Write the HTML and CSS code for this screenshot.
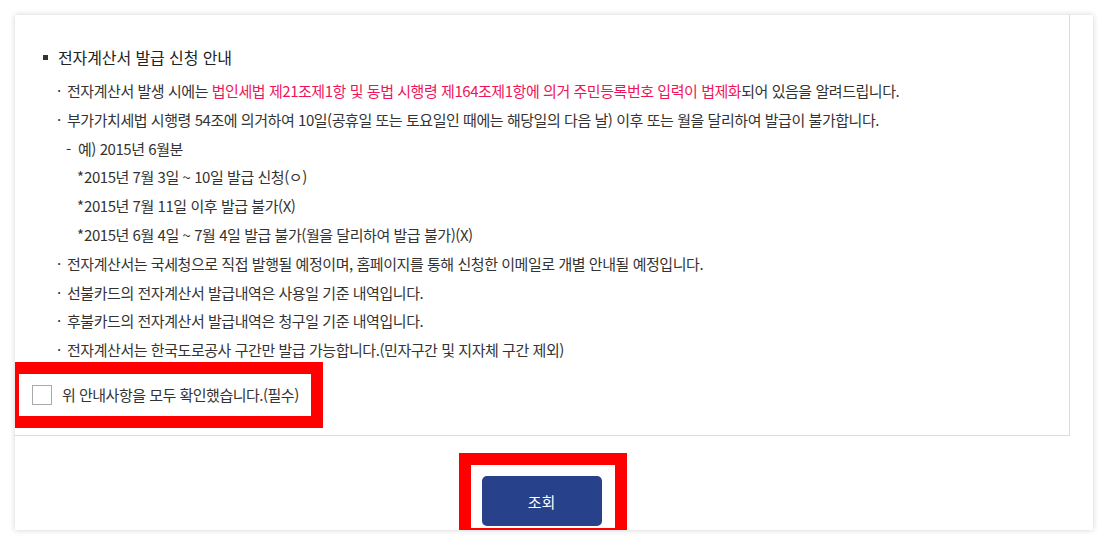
FILE: index.html
```html
<!DOCTYPE html>
<html lang="ko">

<head>
    <meta charset="UTF-8">
    <meta name="viewport" content="width=device-width, initial-scale=1.0">
    <title>전자계산서 발급 신청</title>
    <link rel="stylesheet" href="styles.css">
</head>

<body>
    <div class="card">
        <div class="notice">
            <h3 class="notice-title">전자계산서 발급 신청 안내</h3>
            <ul class="notice-list">
                <li>전자계산서 발생 시에는 <span class="em">법인세법 제21조제1항 및 동법 시행령 제164조제1항에 의거 주민등록번호 입력이 법제화</span>되어 있음을 알려드립니다.</li>
                <li>부가가치세법 시행령 54조에 의거하여 10일(공휴일 또는 토요일인 때에는 해당일의 다음 날) 이후 또는 월을 달리하여 발급이 불가합니다.</li>
                <li class="sub dash">예) 2015년 6월분</li>
                <li class="sub star">2015년 7월 3일 ~ 10일 발급 신청(ㅇ)</li>
                <li class="sub star">2015년 7월 11일 이후 발급 불가(X)</li>
                <li class="sub star">2015년 6월 4일 ~ 7월 4일 발급 불가(월을 달리하여 발급 불가)(X)</li>
                <li>전자계산서는 국세청으로 직접 발행될 예정이며, 홈페이지를 통해 신청한 이메일로 개별 안내될 예정입니다.</li>
                <li>선불카드의 전자계산서 발급내역은 사용일 기준 내역입니다.</li>
                <li>후불카드의 전자계산서 발급내역은 청구일 기준 내역입니다.</li>
                <li>전자계산서는 한국도로공사 구간만 발급 가능합니다.(민자구간 및 지자체 구간 제외)</li>
            </ul>
            <div class="mark agree-mark">
                <label class="agree">
                    <input type="checkbox" id="agree">
                    <span class="box"></span>
                    <span>위 안내사항을 모두 확인했습니다.(필수)</span>
                </label>
            </div>
        </div>

        <div class="btn-area">
            <div class="mark btn-mark">
                <button type="button" class="btn-search">조회</button>
            </div>
        </div>
    </div>
</body>

</html>
```

FILE: styles.css
```css
body {
    margin: 0;
    padding: 15px;
    background-color: #ffffff;
    font-family: "Noto Sans CJK KR", "Noto Sans", sans-serif;
    color: #333;
}

.card {
    height: 515px;
    background-color: #ffffff;
    overflow: hidden;
    box-shadow: 0 0 6px rgba(0, 0, 0, 0.18);
}

.notice {
    width: 1054px;
    height: 390px;
    margin-top: -30px;
    padding-top: 60px;
    border-right: 1px solid #dcdcdc;
    border-bottom: 1px solid #dcdcdc;
}

.notice-title {
    margin: 0 0 8px 28px;
    font-size: 16px;
    font-weight: 400;
    line-height: 24px;
    letter-spacing: -0.1px;
    color: #222;
    display: flex;
    align-items: center;
    gap: 10px;
}

.notice-title::before {
    content: "";
    width: 5px;
    height: 5px;
    background-color: #333;
}

.notice-list {
    list-style: none;
    margin: 0;
    padding: 0 0 0 42px;
}

.notice-list li {
    font-size: 15px;
    line-height: 28.8px;
    letter-spacing: -0.45px;
    color: #333;
}

.notice-list li::before {
    content: "·";
    display: inline-block;
    width: 10px;
}

.notice-list li.dash {
    padding-left: 9px;
}

.notice-list li.dash::before {
    content: "-";
    width: 12px;
}

.notice-list li.star {
    padding-left: 20px;
}

.notice-list li.star::before {
    content: "*";
    width: 7px;
}

.em {
    color: #f0145a;
}

.mark {
    border: 12px solid #ff0000;
    box-sizing: border-box;
}

.agree-mark {
    width: 316px;
    height: 66px;
    margin: -3px 0 0 -8px;
    display: flex;
    align-items: center;
    padding-left: 13px;
}

.agree {
    display: flex;
    align-items: center;
    gap: 10px;
    font-size: 15px;
    letter-spacing: -0.5px;
    color: #333;
    cursor: pointer;
}

.agree input {
    display: none;
}

.agree .box {
    width: 20px;
    height: 20px;
    box-sizing: border-box;
    border: 1px solid #aaa;
    background-color: #fff;
}

.btn-area {
    width: 1055px;
    display: flex;
    justify-content: center;
    padding-top: 17px;
}

.btn-mark {
    width: 168px;
    padding: 11px 11px 2px;
}

.btn-search {
    display: block;
    width: 120px;
    height: 50px;
    border: none;
    border-radius: 5px;
    background-color: #27418a;
    color: #fff;
    font-family: inherit;
    font-size: 15px;
    cursor: pointer;
}
```
